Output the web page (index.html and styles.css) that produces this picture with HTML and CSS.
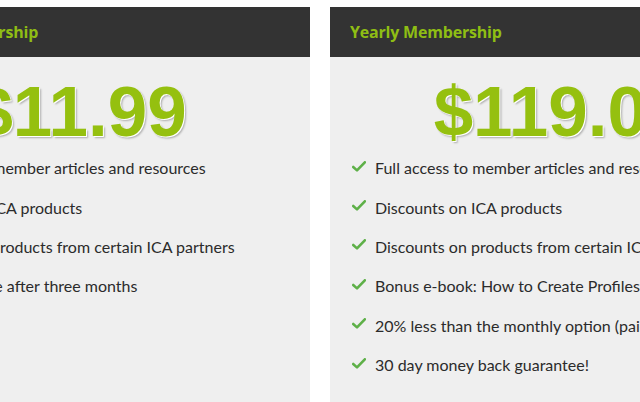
FILE: index.html
```html
<!DOCTYPE html>
<html lang="en">
<head>
<meta charset="utf-8">
<title>Membership</title>
<link rel="stylesheet" href="styles.css">
</head>
<body>
<div class="pricing">
  <section class="plan">
    <header class="plan-head"><h2 class="plan-title">Monthly Membership</h2></header>
    <div class="plan-price">$11.99</div>
    <ul class="features">
      <li class="feature"><svg class="tick" viewBox="0 0 14 11" width="14" height="11"><path d="M1.2 6 L5 9.4 L12.8 1.3" /></svg><span>Full access to member articles and resources</span></li>
      <li class="feature"><svg class="tick" viewBox="0 0 14 11" width="14" height="11"><path d="M1.2 6 L5 9.4 L12.8 1.3" /></svg><span>Discounts on ICA products</span></li>
      <li class="feature"><svg class="tick" viewBox="0 0 14 11" width="14" height="11"><path d="M1.2 6 L5 9.4 L12.8 1.3" /></svg><span>Discounts on products from certain ICA partners</span></li>
      <li class="feature"><svg class="tick" viewBox="0 0 14 11" width="14" height="11"><path d="M1.2 6 L5 9.4 L12.8 1.3" /></svg><span>Cancel anytime after three months</span></li>
    </ul>
  </section>
  <section class="plan">
    <header class="plan-head"><h2 class="plan-title">Yearly Membership</h2></header>
    <div class="plan-price">$119.00</div>
    <ul class="features">
      <li class="feature"><svg class="tick" viewBox="0 0 14 11" width="14" height="11"><path d="M1.2 6 L5 9.4 L12.8 1.3" /></svg><span>Full access to member articles and resources</span></li>
      <li class="feature"><svg class="tick" viewBox="0 0 14 11" width="14" height="11"><path d="M1.2 6 L5 9.4 L12.8 1.3" /></svg><span>Discounts on ICA products</span></li>
      <li class="feature"><svg class="tick" viewBox="0 0 14 11" width="14" height="11"><path d="M1.2 6 L5 9.4 L12.8 1.3" /></svg><span>Discounts on products from certain ICA partners</span></li>
      <li class="feature"><svg class="tick" viewBox="0 0 14 11" width="14" height="11"><path d="M1.2 6 L5 9.4 L12.8 1.3" /></svg><span>Bonus e-book: How to Create Profiles That Stand Out</span></li>
      <li class="feature"><svg class="tick" viewBox="0 0 14 11" width="14" height="11"><path d="M1.2 6 L5 9.4 L12.8 1.3" /></svg><span>20% less than the monthly option (paid annually)</span></li>
      <li class="feature"><svg class="tick" viewBox="0 0 14 11" width="14" height="11"><path d="M1.2 6 L5 9.4 L12.8 1.3" /></svg><span>30 day money back guarantee!</span></li>
    </ul>
  </section>
</div>
</body>
</html>
```
FILE: styles.css
```css
html, body {
  margin: 0;
  padding: 0;
  background: #ffffff;
  overflow: hidden;
}
body {
  width: 640px;
  height: 402px;
  font-family: Lato, "Open Sans", sans-serif;
}
.pricing {
  display: flex;
  gap: 20px;
  margin-left: -150px;
  padding-top: 7px;
  width: 940px;
}
.plan {
  flex: 0 0 460px;
  background: #efefef;
  min-height: 420px;
}
.plan-head {
  height: 50px;
  background: #333333;
  display: flex;
  align-items: center;
  padding-left: 20px;
}
.plan-title {
  margin: 0;
  font-family: "Open Sans", sans-serif;
  font-weight: 700;
  font-size: 16px;
  color: #8fbe14;
  letter-spacing: -0.2px;
}
.plan-price {
  margin-top: 20px;
  text-align: center;
  font-family: "Liberation Sans", Arial, sans-serif;
  font-weight: 700;
  font-size: 71px;
  line-height: 70px;
  color: #95c00f;
  text-shadow: 1px 1px 0 #ffffff, 2px 2px 2px rgba(0, 0, 0, 0.28);
}
.features {
  margin: 1px 0 0;
  padding: 0 0 0 22px;
  list-style: none;
  white-space: nowrap;
}
.feature {
  display: flex;
  align-items: center;
  gap: 9px;
  height: 39.4px;
  font-size: 16px;
  color: #2b2b2b;
}
.tick {
  flex: none;
  fill: none;
  stroke: #5eb048;
  stroke-width: 2.6;
  stroke-linecap: round;
  stroke-linejoin: round;
  margin-top: -3px;
}
```
